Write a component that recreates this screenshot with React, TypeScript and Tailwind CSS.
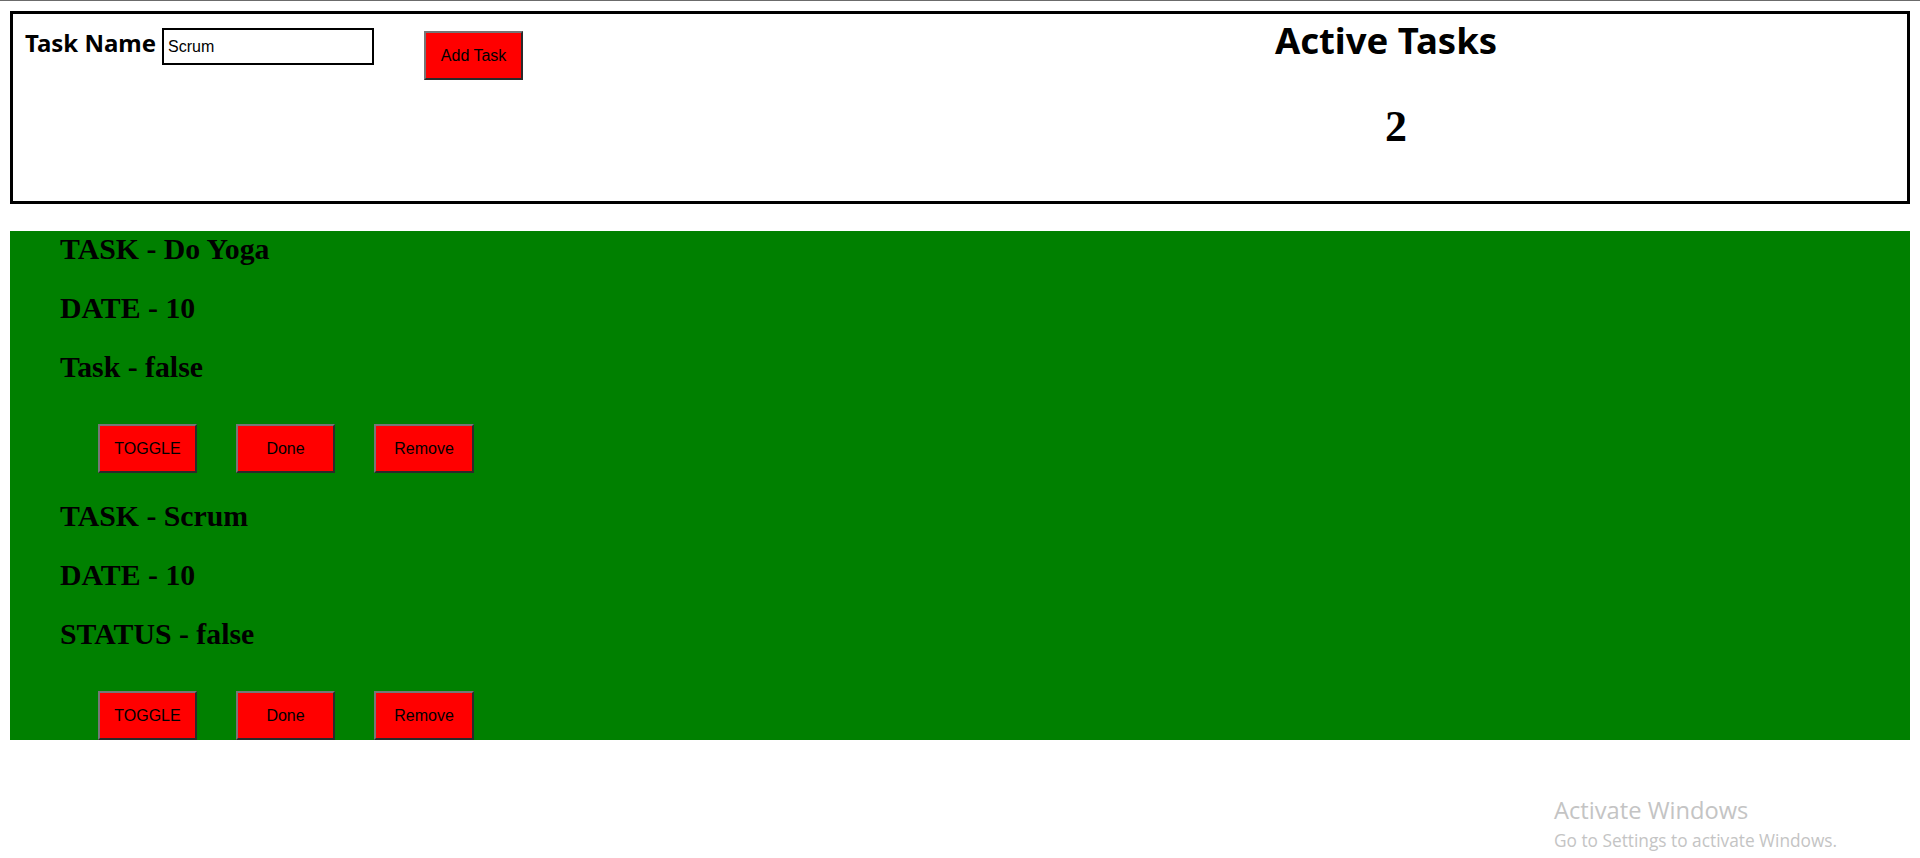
import React, { useState } from 'react';

type Task = { id: number; name: string; date: number; done: boolean; statusLabel: string };

const comic = "font-['Comic_Sans_MS','Noto_Sans',sans-serif]";
const serif = "font-['Liberation_Serif','Times_New_Roman',serif]";
const arial = "font-['Liberation_Sans',Arial,sans-serif]";

const btn =
  `bg-[#ff0000] text-black ${arial} text-[16px] border-2 border-t-[#767676] border-l-[#767676] border-b-[#2a2a2a] border-r-[#2a2a2a]`;

export default function App() {
  const [name, setName] = useState('Scrum');
  const [tasks, setTasks] = useState<Task[]>([
    { id: 1, name: 'Do Yoga', date: 10, done: false, statusLabel: 'Task' },
    { id: 2, name: 'Scrum', date: 10, done: false, statusLabel: 'STATUS' },
  ]);

  const toggle = (id: number) =>
    setTasks(prev => prev.map(t => (t.id === id ? { ...t, done: !t.done } : t)));
  const remove = (id: number) => setTasks(prev => prev.filter(t => t.id !== id));

  return (
    <div className="min-h-[858px] bg-white border-t border-[#6b6b6b] relative">
      {/* Header */}
      <div className="mx-[10px] mt-[10px] h-[193px] border-[3px] border-black flex">
        <div className="w-[852px] flex items-start pl-[12px] pt-[14px]">
          <label className={`${comic} font-bold text-[24px] leading-[30px] text-black`}>Task Name</label>
          <input
            value={name}
            onChange={e => setName(e.target.value)}
            className={`ml-[6px] w-[212px] h-[37px] border-2 border-black px-[4px] text-[16px] ${arial} text-black outline-none`}
          />
          <button
            onClick={() =>
              setTasks(prev => [...prev, { id: Date.now(), name, date: 10, done: false, statusLabel: 'STATUS' }])
            }
            className={`${btn} ml-[50px] mt-[3px] w-[99px] h-[49px]`}
          >
            Add Task
          </button>
        </div>
        <div className="flex-1 flex flex-col items-center pt-[1px]">
          <h1 className={`${comic} font-bold text-[36.5px] leading-[50px] text-black`}>Active Tasks</h1>
          <div className={`${serif} font-bold text-[44px] leading-[48px] text-black mt-[38px] pl-[20px]`}>
            {tasks.filter(t => !t.done).length}
          </div>
        </div>
      </div>

      {/* Task list */}
      <div className="mx-[10px] mt-[27px] bg-[#008000]">
        {tasks.map((t, i) => (
          <div key={t.id} className={i > 0 ? 'pt-[26px]' : 'pt-px'}>
            <div className={`pl-[50px] ${serif} font-bold text-[29.8px] leading-[33px] text-black flex flex-col gap-[26px]`}>
              <h2>TASK - {t.name}</h2>
              <h2>DATE - {t.date}</h2>
              <h2>
                {t.statusLabel} - {String(t.done)}
              </h2>
            </div>
            <div className="pl-[88px] mt-[41px] flex gap-[39px]">
              <button onClick={() => toggle(t.id)} className={`${btn} w-[99px] h-[49px]`}>
                TOGGLE
              </button>
              <button onClick={() => toggle(t.id)} className={`${btn} w-[99px] h-[49px]`}>
                Done
              </button>
              <button onClick={() => remove(t.id)} className={`${btn} w-[100px] h-[49px]`}>
                Remove
              </button>
            </div>
          </div>
        ))}
      </div>

      {/* Windows watermark */}
      <div className="absolute left-[1554px] top-[794px] text-[#c4c4c4] font-['Open_Sans','Noto_Sans',sans-serif] pointer-events-none">
        <div className="text-[23.7px] leading-[30px]">Activate Windows</div>
        <div className="text-[17.3px] leading-[22px] mt-[5px]">Go to Settings to activate Windows.</div>
      </div>
    </div>
  );
}
